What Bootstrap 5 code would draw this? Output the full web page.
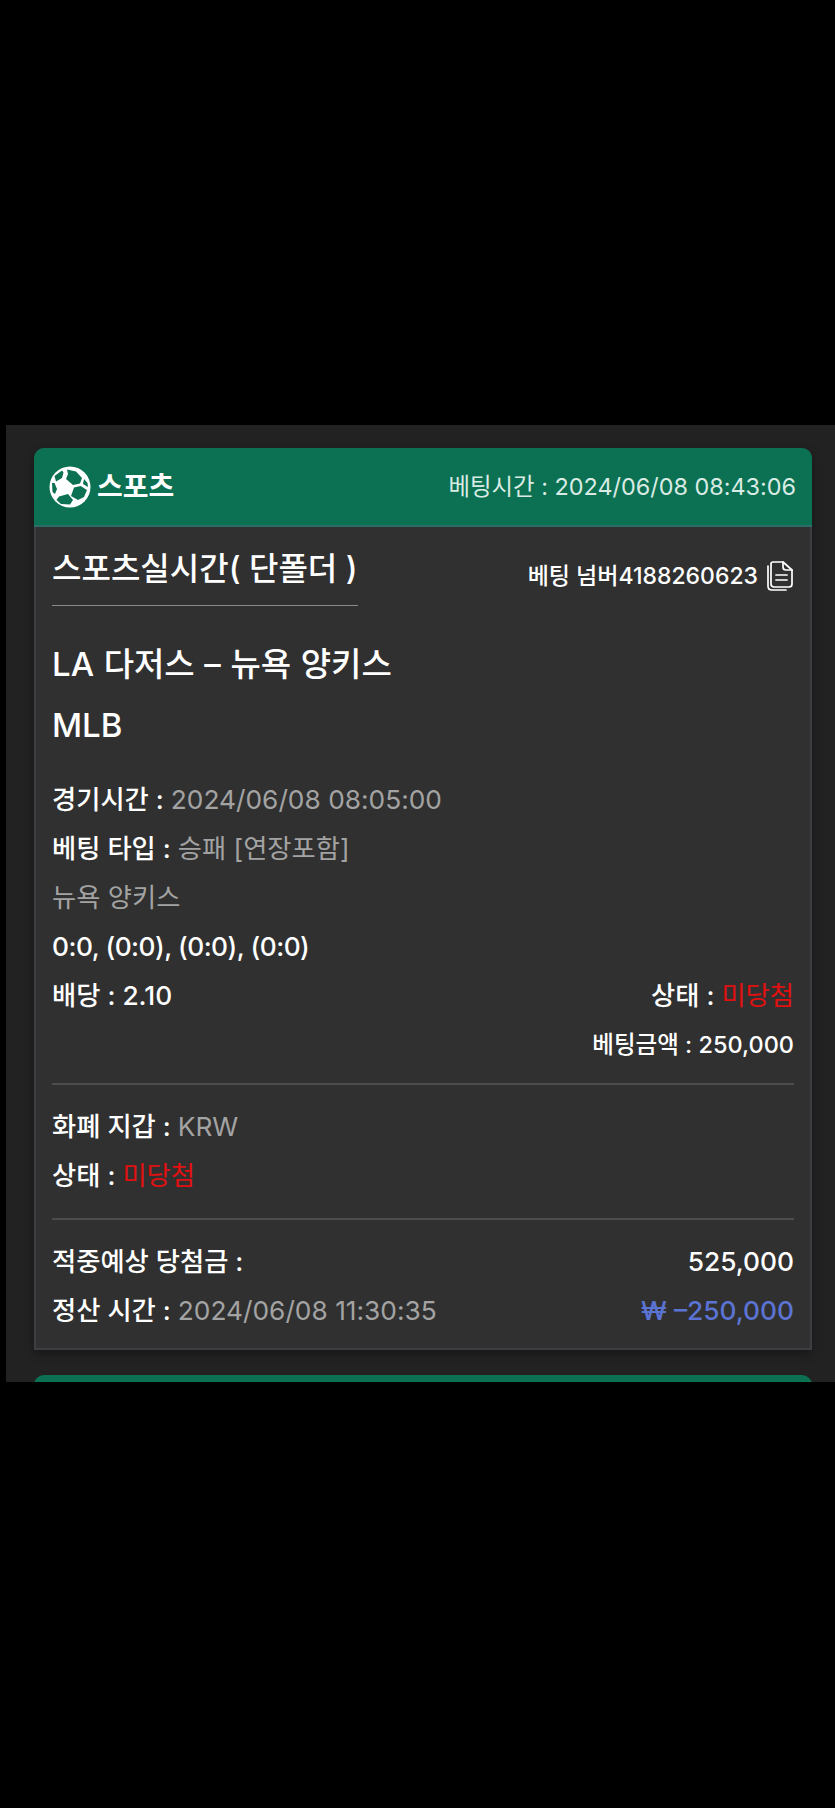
<!DOCTYPE html>
<html lang="ko">
<head>
  <meta charset="UTF-8" />
  <meta name="viewport" content="width=device-width, initial-scale=1.0"/>
  <title>베팅 내역</title>
  <link href="https://cdn.jsdelivr.net/npm/bootstrap@5.3.0/dist/css/bootstrap.min.css" rel="stylesheet">
  <style>
    body {
      background: #000;
      height: 1808px;
      overflow: hidden;
      font-family: Inter, "Noto Sans CJK KR", sans-serif;
      font-size: 26.3px;
      color: #fff;
    }
    .bet-panel {
      margin-top: 425px;
      margin-left: 6px;
      height: 957px;
      padding: 23px 23px 0 28px;
      overflow: hidden;
      background: #222;
    }
    .bet-card {
      background: #303030;
      border: 2px solid #3e3e42;
      border-top: 0;
      border-radius: 10px 10px 0 0;
      box-shadow: 0 3px 10px rgba(0,0,0,.35);
    }
    .bet-head {
      height: 79px;
      margin: 0 -2px;
      padding: 0 16px 0 15px;
      background: #0b7152;
      border-bottom: 2px solid #2c6d68;
      border-radius: 10px 10px 0 0;
    }
    .head-brand { gap: 6px; }
    .head-name { font-size: 28px; font-weight: 700; }
    .head-time { font-size: 23.4px; color: #d9ebe4; }
    .bet-body { padding: 19px 16px 13px 16px; }
    .title-top { margin-bottom: 28px; }
    .title-wrap { padding: 0 0 13px; border-bottom: 1px solid #8a8a8a; font-size: 32px; font-weight: 500; line-height: 46px; }
    .slip-no { font-size: 23px; font-weight: 500; margin-top: 13px; }
    .match-line { font-size: 33px; font-weight: 500; line-height: 61px; word-spacing: .8px; }
    .match-last { margin-bottom: 19px; }
    .info-line { height: 49px; line-height: 49px; font-weight: 500; white-space: nowrap; }
    .score-line { letter-spacing: -.5px; }
    .dim { color: #a3a3a3; font-weight: 400; }
    .lose { color: #e01010; font-weight: 400; }
    .minus { color: #5b73d2; font-weight: 500; }
    .small-row { font-size: 23.5px; }
    .rule { height: 2px; background: #4c4c4c; }
    .rule-a { margin: 14px 0 17px; }
    .rule-b { margin: 18px 0 17px; }
    .next-head { height: 30px; margin-top: 25px; background: #0b7152; border-radius: 10px 10px 0 0; }
  </style>
</head>
<body>
  <div class="bet-panel">
    <div class="bet-card">
      <div class="bet-head d-flex align-items-center justify-content-between">
        <div class="head-brand d-flex align-items-center">
          <svg width="42" height="42" viewBox="0 0 42 42">
            <circle cx="21" cy="21" r="20.500" fill="#fff"/>
            <g fill="#0b7152">
              <path d="M5.500 10 13 4.500 14.500 6.500 13 12 7 15.500Z"/>
              <path d="M18 3.500 27 5.500 33 12 31 17.500 24 19 17 13 19 8Z"/>
              <path d="M25 21.500 31.500 20 38 24 35 31 29 34 22 30Z"/>
              <path d="M35 13 38.500 17 39 21 34 18Z"/>
              <path d="M10 30.500 19 28 24 34 21 38.500 12 38 7.500 34Z"/>
              <path d="M3 17 5.500 17 8 23 6 28 3.500 26Z"/>
            </g>
          </svg>
          <span class="head-name">스포츠</span>
        </div>
        <div class="head-time">베팅시간 : 2024/06/08 08:43:06</div>
      </div>
      <div class="bet-body">
        <div class="title-top d-flex justify-content-between align-items-start">
          <div class="title-wrap">스포츠실시간( 단폴더 )</div>
          <div class="slip-no d-flex align-items-center gap-2">
            <span>베팅 넘버4188260623</span>
            <svg width="28" height="32" viewBox="0 0 28 32" fill="none" stroke="#fff" stroke-width="1.700" stroke-linejoin="round" stroke-linecap="round">
              <path d="M5 4Q5 2 7 2H17L26 10V24Q26 27 23 27H8Q5 27 5 24Z"/>
              <path d="M17 2V7Q17 10 20 10H26"/>
              <path d="M2 6V26Q2 30 6 30H20"/>
              <path d="M10 15H21M10 20H21"/>
            </svg>
          </div>
        </div>
        <div class="match-line">LA 다저스 – 뉴욕 양키스</div>
        <div class="match-line match-last">MLB</div>
        <div class="info-line">경기시간 : <span class="dim">2024/06/08 08:05:00</span></div>
        <div class="info-line">베팅 타입 : <span class="dim">승패 [연장포함]</span></div>
        <div class="info-line dim">뉴욕 양키스</div>
        <div class="info-line score-line">0:0, (0:0), (0:0), (0:0)</div>
        <div class="info-line d-flex justify-content-between">
          <span>배당 : 2.10</span>
          <span>상태 : <span class="lose">미당첨</span></span>
        </div>
        <div class="info-line small-row text-end">베팅금액 : 250,000</div>
        <div class="rule rule-a"></div>
        <div class="info-line">화폐 지갑 : <span class="dim">KRW</span></div>
        <div class="info-line">상태 : <span class="lose">미당첨</span></div>
        <div class="rule rule-b"></div>
        <div class="info-line d-flex justify-content-between">
          <span>적중예상 당첨금 :</span>
          <span>525,000</span>
        </div>
        <div class="info-line d-flex justify-content-between">
          <span>정산 시간 : <span class="dim">2024/06/08 11:30:35</span></span>
          <span class="minus">₩ –250,000</span>
        </div>
      </div>
    </div>
    <div class="next-head"></div>
  </div>
  <script src="https://cdn.jsdelivr.net/npm/bootstrap@5.3.0/dist/js/bootstrap.bundle.min.js"></script>
</body>
</html>
